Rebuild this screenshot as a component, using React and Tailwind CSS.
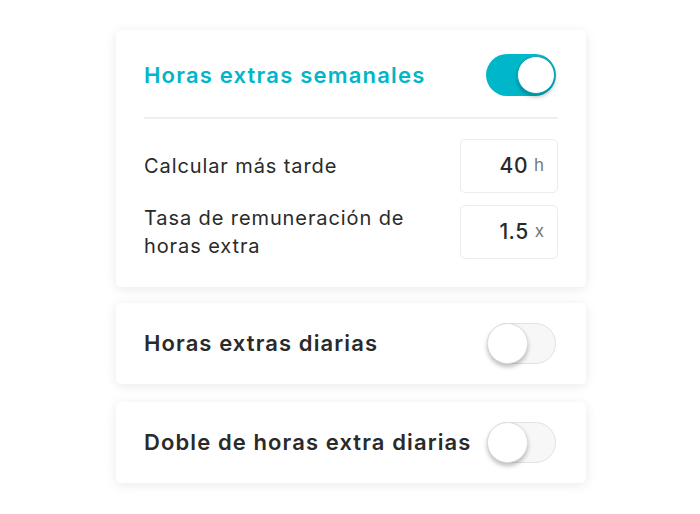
import React from "react";

function Toggle({ on }) {
  return on ? (
    <div className="relative w-[70px] h-[42px] mr-[2px] rounded-full bg-[#00b7c9] shrink-0">
      <div className="absolute right-[1px] top-[2px] w-[38px] h-[38px] rounded-full bg-white border border-[#0aa3b3] shadow-[0_3px_4px_rgba(0,0,0,0.25)]" />
    </div>
  ) : (
    <div className="relative w-[69px] h-[41px] mr-[2px] rounded-full bg-[#f7f7f7] border border-[#e2e2e2] shrink-0">
      <div className="absolute left-[-1px] top-[-1px] w-[41px] h-[41px] rounded-full bg-white border border-[#dcdcdc] shadow-[0_3px_4px_rgba(0,0,0,0.25)]" />
    </div>
  );
}

function Field({ value, unit }) {
  return (
    <div className="w-[98px] h-[54px] rounded-[5px] border border-[#ececec] flex items-center justify-end pr-[13px] gap-[6px] shrink-0">
      <span className="text-[21px] font-medium text-[#2a2a2a] tracking-[0.5px]">{value}</span>
      <span className="text-[17px] text-[#777]">{unit}</span>
    </div>
  );
}

export default function App() {
  return (
    <div
      className="w-[700px] h-[514px] bg-white flex flex-col items-center pt-[30px] pl-[2px] gap-[16px]"
      style={{ fontFamily: "Inter, 'Open Sans', sans-serif" }}
    >
      <div className="w-[470px] rounded-[5px] bg-white shadow-[0_2px_12px_rgba(0,0,0,0.09)] px-[28px] pt-[24px] pb-[27px]">
        <div className="flex items-center justify-between pb-[21px] border-b-2 border-[#efefef]">
          <span className="text-[22px] font-semibold text-[#00b7c9] tracking-[1.2px]">Horas extras semanales</span>
          <Toggle on />
        </div>
        <div className="flex items-center justify-between mt-[20px]">
          <span className="text-[20px] text-[#2a2a2a] tracking-[0.9px]">Calcular más tarde</span>
          <Field value="40" unit="h" />
        </div>
        <div className="flex items-center justify-between mt-[11px]">
          <span className="text-[20px] leading-[28px] text-[#2a2a2a] tracking-[0.9px] w-[300px]">Tasa de remuneración de horas extra</span>
          <Field value="1.5" unit="x" />
        </div>
      </div>
      <div className="w-[470px] h-[81px] rounded-[5px] bg-white shadow-[0_2px_12px_rgba(0,0,0,0.09)] px-[28px] flex items-center justify-between">
        <span className="text-[22px] font-semibold text-[#2a2a2a] tracking-[1.1px]">Horas extras diarias</span>
        <Toggle />
      </div>
      <div className="w-[470px] h-[81px] mt-[2px] rounded-[5px] bg-white shadow-[0_2px_12px_rgba(0,0,0,0.09)] px-[28px] flex items-center justify-between">
        <span className="text-[22px] font-semibold text-[#2a2a2a] tracking-[1.1px]">Doble de horas extra diarias</span>
        <Toggle />
      </div>
    </div>
  );
}
